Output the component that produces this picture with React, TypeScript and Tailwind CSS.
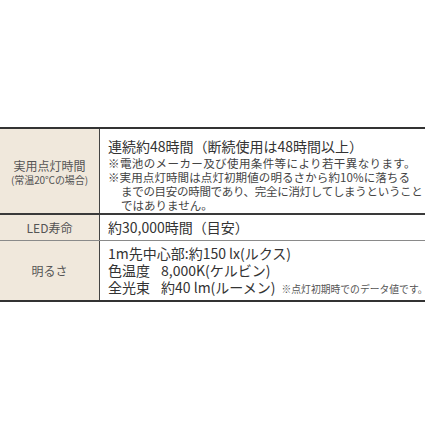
import React from "react";

const font = { fontFamily: '"Noto Sans CJK JP", "Noto Sans", sans-serif' };

export default function App() {
  return (
    <div className="w-[429px] h-[429px] bg-white overflow-hidden" style={font}>
      <div className="mt-[127px] w-[425px] border-t-2 border-b-2 border-[#333] text-[#333]">
        {/* Row 1 */}
        <div className="grid grid-cols-[100px_1fr] border-b-2 border-[#3a3a3a]">
          <div className="bg-[#f0e8dc] border-r border-[#444] flex flex-col items-center justify-center text-[#555] pt-[2px]">
            <div className="text-[12px] leading-[14px]">実用点灯時間</div>
            <div className="text-[10px] leading-[13px] tracking-[-0.1px]">(常温20℃の場合)</div>
          </div>
          <div className="pl-[8px] pt-[7px]">
            <div className="text-[14px] leading-[20px] whitespace-nowrap">連続約48時間（断続使用は48時間以上）</div>
            <div className="text-[11.5px] leading-[14px] text-[#444] whitespace-nowrap">
              <div className="tracking-[0.4px]">※電池のメーカー及び使用条件等により若干異なります。</div>
              <div className="tracking-[0.1px]">※実用点灯時間は点灯初期値の明るさから約10%に落ちる</div>
              <div className="pl-[13px] tracking-[-0.3px]">までの目安の時間であり、完全に消灯してしまうということ</div>
              <div className="pl-[13px]">ではありません。</div>
            </div>
            <div className="h-[1px]" />
          </div>
        </div>
        {/* Row 2 */}
        <div className="grid grid-cols-[100px_1fr] border-b border-[#8a8a8a]">
          <div className="bg-[#f0e8dc] border-r border-[#444] flex items-center justify-center text-[12px] text-[#555]">
            LED寿命
          </div>
          <div className="pl-[8px] text-[14px] leading-[25px] whitespace-nowrap">約30,000時間（目安）</div>
        </div>
        {/* Row 3 */}
        <div className="grid grid-cols-[100px_1fr]">
          <div className="bg-[#f0e8dc] border-r border-[#444] flex items-center justify-center text-[12px] text-[#555]">
            明るさ
          </div>
          <div className="pl-[8px] pt-[4px] pb-[2px] text-[14px] leading-[17px] whitespace-nowrap">
            <div>1m先中心部:約150 lx(ルクス)</div>
            <div className="flex items-baseline">
              <span>色温度</span>
              <span className="ml-[11px]">8,000K(ケルビン)</span>
            </div>
            <div className="flex items-baseline">
              <span>全光束</span>
              <span className="ml-[11px]">約40 lm(ルーメン)</span>
              <span className="ml-[6px] text-[9.8px] text-[#555]">※点灯初期時でのデータ値です。</span>
            </div>
          </div>
        </div>
      </div>
    </div>
  );
}
